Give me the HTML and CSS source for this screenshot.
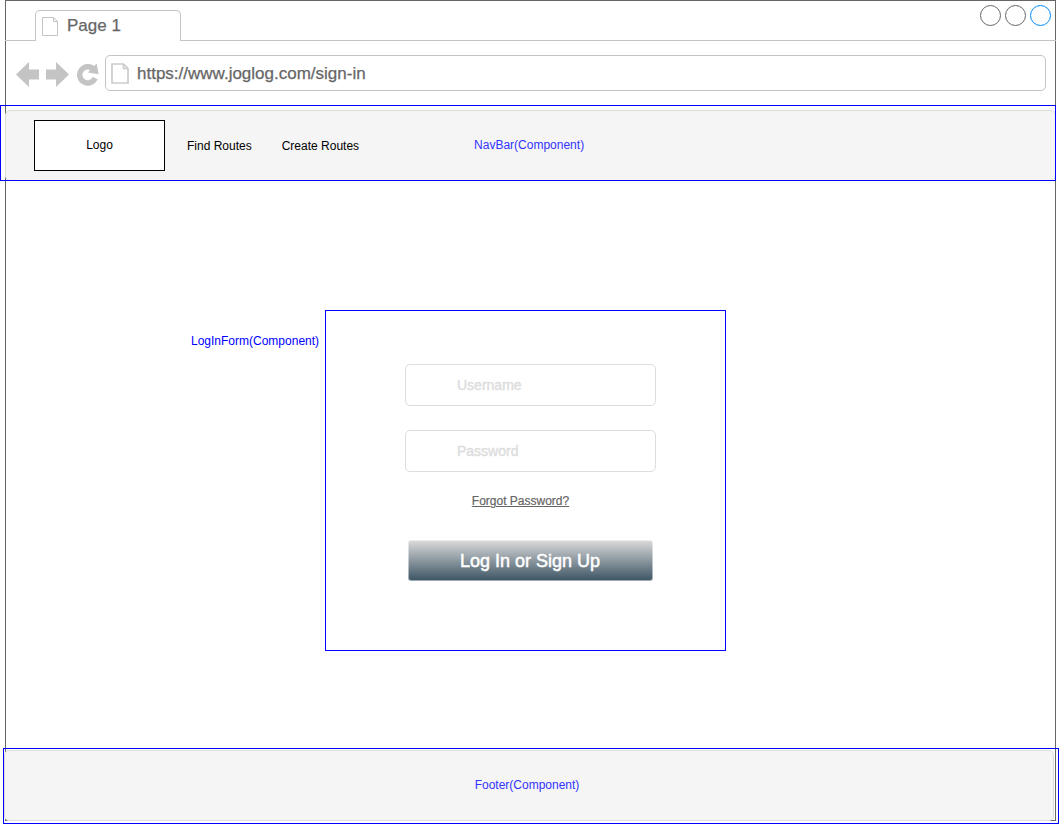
FILE: index.html
```html
<!DOCTYPE html>
<html lang="en">
<head>
<meta charset="utf-8">
<title>Page 1</title>
<link rel="stylesheet" href="styles.css">
</head>
<body>
<div class="browser">
  <div class="tabs">
    <div class="tab">
      <svg class="tab-icon" width="16" height="19" viewBox="0 0 16 19"><path d="M.5.5h11l4 4v14H.5zM11.5.5v4h4" fill="#fff" stroke="#c4c4c4"/></svg>
      <span class="tab-title">Page 1</span>
    </div>
    <svg class="window-buttons" width="73" height="23" viewBox="0 0 73 23" fill="none"><circle cx="11.5" cy="11.5" r="10" stroke="#666"/><circle cx="36.5" cy="11.5" r="10" stroke="#666"/><circle cx="61.5" cy="11.5" r="10" stroke="#008cff"/></svg>
  </div>
  <div class="toolbar">
    <svg class="controls" width="84" height="30" viewBox="16 60 84 30">
      <path d="M16 74.5 29 62v7.5h10v10H29V87zM69 74.5 56 62v7.5H46v10h10V87z" fill="#c4c4c4"/>
      <path d="M93.6 69.2A8.1 8.1 0 1 0 95.2 78.2" fill="none" stroke="#c4c4c4" stroke-width="5.4"/>
      <path d="M96.7 63.5 98.6 74.2 87.8 72.6z" fill="#c4c4c4"/>
    </svg>
    <div class="address">
      <svg class="address-icon" width="18" height="21" viewBox="0 0 18 21"><path d="M1 1h11.5l4.5 4.5V20H1zM12.5 1v4.5H17" fill="#fff" stroke="#ccc" stroke-width="1.7"/></svg>
      <span class="url">https://www.joglog.com/sign-in</span>
    </div>
  </div>
  <header class="region navbar">
    <div class="panel nav-panel">
      <div class="logo">Logo</div>
      <a class="find">Find Routes</a>
      <a class="create">Create Routes</a>
      <span class="note nav-note">NavBar(Component)</span>
    </div>
  </header>
  <main class="content">
    <span class="form-note">LogInForm(Component)</span>
    <form class="login">
      <div class="field">Username</div>
      <div class="field">Password</div>
      <a class="forgot">Forgot Password?</a>
      <div class="submit">Log In or Sign Up</div>
    </form>
  </main>
  <footer class="region footer">
    <div class="panel footer-panel"><span class="note">Footer(Component)</span></div>
  </footer>
</div>
</body>
</html>
```
FILE: styles.css
```css
* { box-sizing: border-box; }
body { margin: 0; height: 824px; background: #fff; color: #000; font: 12px/14px "Liberation Sans", Arial, sans-serif; white-space: nowrap; }
svg { display: block; flex: none; }
.browser { width: 1051px; height: 821px; margin-left: 5px; border: 1px solid #666; display: flex; flex-direction: column; }
.tabs { height: 40px; flex: none; display: flex; justify-content: space-between; margin: 0 -1px; padding: 9px 1px 0 30px; border-bottom: 1px solid #c4c4c4; }
.tab { width: 146px; height: 31px; display: flex; border: 1px solid #c4c4c4; border-bottom: 0; border-radius: 5px 5px 0 0; background: #fff; padding-left: 6px; }
.tab-icon { margin-top: 6px; }
.tab-title { margin-left: 9px; font-size: 17px; line-height: 29px; color: #666; -webkit-text-stroke: .25px #666; }
.window-buttons { margin: -6px 3px 0 0; }
.toolbar { height: 64px; flex: none; display: flex; padding: 14px 9px 0 10px; }
.controls { margin-top: 5px; }
.address { width: 941px; height: 36px; margin-left: 5px; border: 1px solid #c4c4c4; border-radius: 5px; display: flex; align-items: center; padding-left: 5px; }
.url { margin-left: 8px; padding-top: 2px; font-size: 17px; line-height: 20px; color: #666; -webkit-text-stroke: .25px #666; }
.region { width: 1056px; height: 76px; flex: none; outline: 1px solid #00f; outline-offset: -1px; }
.navbar { margin-left: -6px; padding: 5px 0 0 5px; }
.footer { margin-left: -3px; padding: 2px 0 0 1px; }
.panel { height: 71px; background: #f5f5f5; border: 1px solid #ddd; border-radius: 5px; display: flex; }
.nav-panel { width: 1051px; padding: 9px 0 0 28px; }
.footer-panel { width: 1050px; justify-content: center; padding: 27px 4px 0 0; }
.logo { width: 131px; height: 51px; border: 1px solid #000; background: #fff; line-height: 49px; text-align: center; }
.find { margin: 19px 0 0 22px; }
.create { margin: 19px 0 0 30px; }
.note { color: #3333ff; }
.nav-note { margin: 18px 0 0 115px; }
.content { height: 567px; flex: none; display: flex; padding: 129px 0 0 185px; }
.form-note { width: 134px; margin-top: 24px; color: #00f; }
.login { width: 401px; height: 341px; border: 1px solid #00f; padding: 53px 0 0 79px; display: flex; flex-direction: column; }
.field { width: 251px; height: 42px; margin-bottom: 24px; border: 1px solid #ddd; border-radius: 5px; padding-left: 51px; font-size: 14px; line-height: 40px; color: #ddd; -webkit-text-stroke: .4px #ddd; }
.forgot { width: 231px; margin: -2px 0 32px; text-align: center; color: #666; text-decoration: underline; -webkit-text-stroke: .2px #666; }
.submit { width: 245px; height: 41px; margin-left: 3px; border: 1px solid rgba(255,255,255,.5); border-radius: 3px; background: linear-gradient(#dcdcdc, #3b5363) border-box; padding-right: 1px; text-align: center; color: #fff; font-size: 18px; line-height: 40px; -webkit-text-stroke: .5px #fff; }
```
